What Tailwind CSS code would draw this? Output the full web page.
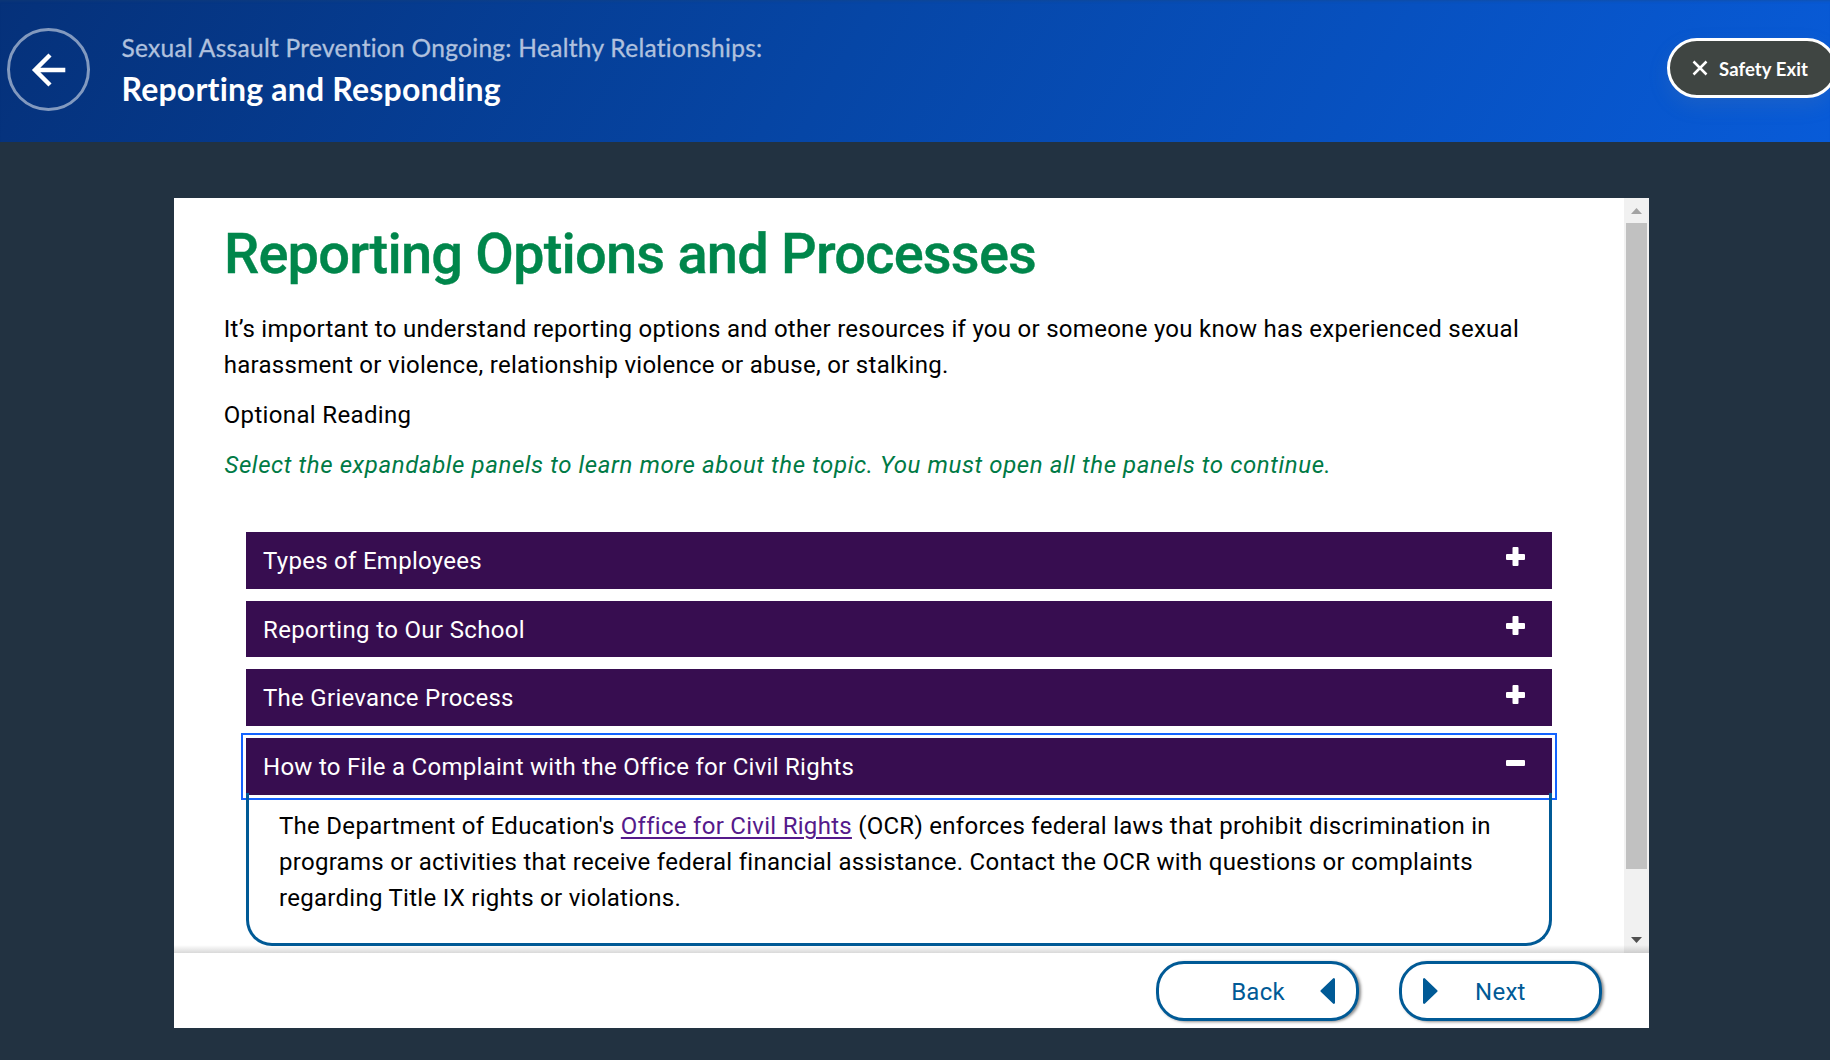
<!DOCTYPE html>
<html lang="en">
<head>
<meta charset="utf-8">
<title>Reporting and Responding</title>
<script src="https://cdn.jsdelivr.net/npm/@tailwindcss/browser@4"></script>
</head>
<body class="h-[1060px] w-[1830px] overflow-hidden bg-[#223241]">
<header class="flex h-[142px] items-start overflow-hidden bg-[linear-gradient(120deg,#05317a_0%,#0646a6_46%,#085bd8_100%)] font-['Lato',sans-serif] shadow-[inset_0_3px_3px_-2px_rgba(35,70,110,0.35)]">
  <button class="mt-7 ml-[7px] flex size-[83px] shrink-0 items-center justify-center rounded-full border-3 border-white/50" aria-label="Go back">
    <svg class="h-[34px] w-[36px]" viewBox="0 0 36 34" fill="none" stroke="#fff" stroke-width="4.400"><path d="M34.300 17H4M19 2 4 17l15 15"/></svg>
  </button>
  <div class="mt-[31px] ml-[31.5px] grow whitespace-nowrap">
    <div class="text-[24.5px] leading-[33px] tracking-[0.29px] text-[#b0c1de] [-webkit-text-stroke:0.3px_#b0c1de]">Sexual Assault Prevention Ongoing: Healthy Relationships:</div>
    <h1 class="mt-[5px] text-[32px] leading-[40px] font-bold tracking-[0.2px] text-white">Reporting and Responding</h1>
  </div>
  <button class="mt-[38px] -mr-[7px] flex h-[60px] w-[170px] shrink-0 items-center rounded-full border-3 border-white bg-[#3f4542] pl-[22px] text-white shadow-[0_8px_20px_rgba(130,140,150,0.15)]">
    <svg class="size-4" viewBox="0 0 16 16" fill="none" stroke="#fff" stroke-width="2.500"><path d="m1.500 1.500 13 13m0-13-13 13"/></svg>
    <span class="mt-[1px] ml-[11px] text-[18.5px] leading-6 font-bold tracking-[0.1px] whitespace-nowrap">Safety Exit</span>
  </button>
</header>

<main class="mt-14 ml-[174px] flex h-[830px] w-[1475px] flex-col bg-white font-['Roboto',sans-serif] text-[24px] leading-[36px] tracking-[0.28px] text-black">
  <div class="relative flex h-[755px]">
    <section class="w-[1450px] pt-6 pl-[49px]">
      <h2 class="ml-px text-[56px] leading-[64px] font-medium tracking-[-0.81px] text-[#00864b] [-webkit-text-stroke:0.4px_#00864b]">Reporting Options and Processes</h2>
      <p class="mt-[25px] ml-[0.7px]">It’s important to understand reporting options and other resources if you or someone you know has experienced sexual<br>harassment or violence, relationship violence or abuse, or stalking.</p>
      <p class="mt-[14px] ml-[0.7px] tracking-[0.35px]">Optional Reading</p>
      <p class="mt-[14px] ml-[1.5px] tracking-[0.6px] text-[#007a45] italic">Select the expandable panels to learn more about the topic. You must open all the panels to continue.</p>

      <div class="mt-[49px] ml-[23px] flex w-[1306px] flex-col gap-3">
        <div class="flex h-[57px] justify-between bg-[#370d50] pt-[11px] pr-[26px] pl-[17px] text-white">
          <span>Types of Employees</span>
          <svg class="mt-1 h-5 w-[21px]" viewBox="0 0 21 20" fill="#fff"><rect x="1" y="7" width="19" height="6" rx="1"/><rect x="7.5" y="0" width="6" height="19" rx="1"/></svg>
        </div>
        <div class="flex h-[56px] justify-between bg-[#370d50] pt-[11px] pr-[26px] pl-[17px] text-white">
          <span class="tracking-[0.34px]">Reporting to Our School</span>
          <svg class="mt-1 h-5 w-[21px]" viewBox="0 0 21 20" fill="#fff"><rect x="1" y="7" width="19" height="6" rx="1"/><rect x="7.5" y="0" width="6" height="19" rx="1"/></svg>
        </div>
        <div class="flex h-[57px] justify-between bg-[#370d50] pt-[11px] pr-[26px] pl-[17px] text-white">
          <span>The Grievance Process</span>
          <svg class="mt-[5px] h-5 w-[21px]" viewBox="0 0 21 20" fill="#fff"><rect x="1" y="7" width="19" height="6" rx="1"/><rect x="7.5" y="0" width="6" height="19" rx="1"/></svg>
        </div>
        <div>
          <div class="flex h-[57px] justify-between bg-[#370d50] pt-[11px] pr-[26px] pl-[17px] text-white outline-2 outline-offset-3 outline-[#1463ff]">
            <span>How to File a Complaint with the Office for Civil Rights</span>
            <svg class="mt-1 h-5 w-[21px]" viewBox="0 0 21 20" fill="#fff"><rect x="1" y="7" width="19" height="6" rx="1"/></svg>
          </div>
          <div class="relative -mt-0.5 h-[153px] rounded-b-[26px] border-x-3 border-b-3 border-[#005a96] pt-[15px] pl-[30px] whitespace-nowrap">
            The Department of Education's <a class="text-[#551a8b] underline decoration-2 underline-offset-[3px]">Office for Civil Rights</a> (OCR) enforces federal laws that prohibit discrimination in<br>programs or activities that receive federal financial assistance. Contact the OCR with questions or complaints<br>regarding Title IX rights or violations.
          </div>
        </div>
      </div>
    </section>
    <aside class="flex w-[25px] flex-col items-center bg-[#f1f1f1]">
      <svg class="mt-2.5 h-1.5 w-[11px]" viewBox="0 0 11 6" fill="#a3a3a3"><path d="M5.5 0 11 6H0z"/></svg>
      <div class="mt-[9px] h-[646px] w-[21px] bg-[#c1c1c1]"></div>
      <svg class="mt-[68px] h-1.5 w-[11px]" viewBox="0 0 11 6" fill="#505050"><path d="M0 0h11L5.5 6z"/></svg>
    </aside>
    <div class="absolute inset-x-0 bottom-0 h-2 bg-linear-to-t from-black/15 to-transparent"></div>
  </div>
  <footer class="flex h-[75px] justify-end gap-10 bg-white pt-2 pr-[47px] text-[#005a96]">
    <button class="flex h-[60px] w-[203px] items-center justify-end rounded-[28px] border-3 border-[#005a96] bg-white pr-[21px] shadow-[2px_1px_3px_rgba(0,0,0,0.45)]">
      <span class="mt-0.5 mr-[35px]">Back</span>
      <svg class="h-[26px] w-[15px]" viewBox="0 0 15 26" fill="#005a96"><path d="M15 1v24q-1 1.500-2 .5L.5 13.500v-1L13 .5q1-1 2 .5z"/></svg>
    </button>
    <button class="flex h-[60px] w-[203px] items-center rounded-[28px] border-3 border-[#005a96] bg-white pl-[21px] shadow-[2px_1px_3px_rgba(0,0,0,0.45)]">
      <svg class="h-[26px] w-[15px]" viewBox="0 0 15 26" fill="#005a96"><path d="M0 1v24q1 1.500 2 .5L14.500 13.500v-1L2 .5Q1-.5 0 1z"/></svg>
      <span class="mt-0.5 ml-[37px]">Next</span>
    </button>
  </footer>
</main>
</body>
</html>
